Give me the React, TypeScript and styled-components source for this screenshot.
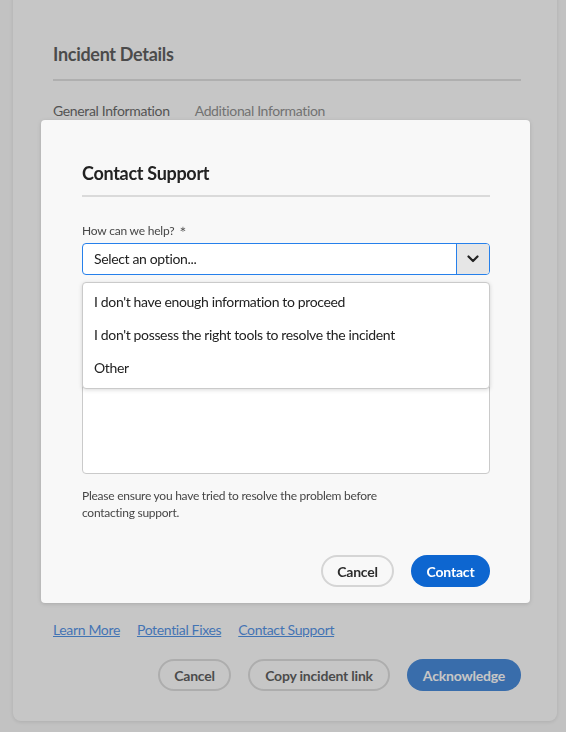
import React from "react";
import styled, { createGlobalStyle } from "styled-components";

const GlobalStyle = createGlobalStyle`
  html, body { margin: 0; padding: 0; }
  body {
    background: #f9f9f9;
    font-family: Lato, "Noto Sans", sans-serif;
    color: #222;
    width: 566px;
    height: 732px;
    overflow: hidden;
  }
  * { box-sizing: border-box; }
`;

const Page = styled.div`
  position: relative;
  width: 566px;
  height: 732px;
  padding: 0 9px 0 13px;
`;

const Card = styled.section`
  margin-top: -10px;
  height: 731px;
  background: #fff;
  border-radius: 8px;
  box-shadow: 0 1px 4px rgba(0, 0, 0, 0.15);
  padding: 51px 36px 0 40px;
  display: flex;
  flex-direction: column;
`;

const CardTitle = styled.h2`
  margin: 0;
  font-size: 18px;
  line-height: 26px;
  font-weight: 700;
  letter-spacing: -0.3px;
  color: #2c2c2c;
`;

const Divider = styled.hr<{ $color: string; $top?: number }>`
  margin: ${(p) => p.$top ?? 0}px 0 0;
  border: none;
  height: 2px;
  background: ${(p) => p.$color};
`;

const Tabs = styled.nav`
  display: flex;
  gap: 25px;
  margin-top: 20px;
`;

const Tab = styled.span<{ $active?: boolean }>`
  font-size: 14px;
  line-height: 20px;
  letter-spacing: -0.35px;
  color: ${(p) => (p.$active ? "#383838" : "#6e6e6e")};
`;

const TabPanel = styled.div`
  flex: 1;
`;

const Links = styled.div`
  display: flex;
  gap: 17px;
  margin-bottom: 19px;
`;

const Link = styled.a`
  font-size: 14px;
  line-height: 20px;
  letter-spacing: -0.35px;
  color: #1a72e0;
  text-decoration: underline;
  cursor: pointer;
`;

const ButtonRow = styled.div<{ $gap: number }>`
  display: flex;
  justify-content: flex-end;
  gap: ${(p) => p.$gap}px;
`;

const Button = styled.button<{ $primary?: boolean; $w: number }>`
  width: ${(p) => p.$w}px;
  height: 32px;
  border-radius: 16px;
  font-family: inherit;
  font-size: 14px;
  font-weight: 700;
  letter-spacing: -0.2px;
  padding: 0;
  cursor: pointer;
  border: 2px solid ${(p) => (p.$primary ? "transparent" : "#d5d5d5")};
  background: ${(p) => (p.$primary ? "#0d66d0" : "transparent")};
  color: ${(p) => (p.$primary ? "#fff" : "#2c2c2c")};
`;

const CardFooter = styled.div`
  height: 30px;
`;

const Underlay = styled.div`
  position: fixed;
  inset: 0;
  background: rgba(120, 120, 120, 0.42);
`;

const Dialog = styled.div`
  position: fixed;
  left: 41px;
  top: 120px;
  width: 489px;
  height: 483px;
  background: #f8f8f8;
  border-radius: 4px;
  box-shadow: 0 1px 4px rgba(0, 0, 0, 0.15);
  padding: 40px 40px 16px 41px;
  display: flex;
  flex-direction: column;
`;

const DialogTitle = styled.h1`
  margin: 0 0 9px;
  font-size: 18px;
  line-height: 26px;
  font-weight: 700;
  letter-spacing: -0.3px;
  color: #222;
`;

const Field = styled.div<{ $top: number }>`
  position: relative;
  display: flex;
  flex-direction: column;
  gap: 4px;
  margin-top: ${(p) => p.$top}px;
`;

const Label = styled.label`
  font-size: 12px;
  line-height: 16px;
  letter-spacing: -0.2px;
  color: #464646;
`;

const Picker = styled.div`
  height: 32px;
  display: flex;
  border: 1px solid #2680eb;
  border-radius: 4px;
  background: #fff;
  overflow: hidden;
`;

const PickerValue = styled.span`
  flex: 1;
  padding-left: 11px;
  font-size: 14px;
  line-height: 30px;
  letter-spacing: -0.35px;
  color: #222;
`;

const PickerButton = styled.span`
  width: 33px;
  border-left: 1px solid #2680eb;
  background: #e6e6e6;
  display: flex;
  align-items: center;
  justify-content: center;
`;

const Popover = styled.ul`
  position: absolute;
  top: calc(100% + 7px);
  left: 0;
  right: 0;
  margin: 0;
  padding: 2px 0 4px;
  list-style: none;
  background: #fff;
  border: 1px solid #cacaca;
  border-radius: 4px;
  box-shadow: 0 1px 4px rgba(0, 0, 0, 0.15);
  z-index: 2;
`;

const Option = styled.li`
  height: 33px;
  padding-left: 11px;
  font-size: 14px;
  line-height: 33px;
  letter-spacing: -0.35px;
  color: #222;
`;

const TextArea = styled.div`
  height: 163px;
  border: 1px solid #cacaca;
  border-radius: 4px;
  background: #fff;
`;

const Help = styled.p`
  margin: 13px 0 0;
  width: 310px;
  font-size: 12px;
  line-height: 17px;
  letter-spacing: -0.25px;
  color: #464646;
`;

const DialogButtons = styled(ButtonRow)`
  margin-top: auto;
`;

const Chevron = () => (
  <svg width="12" height="8" viewBox="0 0 12 8" aria-hidden>
    <path d="M1.5 1.5 L6 6 L10.5 1.5" fill="none" stroke="#222" strokeWidth="2.2" strokeLinecap="round" strokeLinejoin="round" />
  </svg>
);

export default function App() {
  return (
    <>
      <GlobalStyle />
      <Page>
        <Card>
          <CardTitle>Incident Details</CardTitle>
          <Divider $color="#d8d8d8" $top={12} />
          <Tabs>
            <Tab $active>General Information</Tab>
            <Tab>Additional Information</Tab>
          </Tabs>
          <TabPanel />
          <Links>
            <Link>Learn More</Link>
            <Link>Potential Fixes</Link>
            <Link>Contact Support</Link>
          </Links>
          <ButtonRow $gap={17}>
            <Button $w={73}>Cancel</Button>
            <Button $w={142}>Copy incident link</Button>
            <Button $primary $w={114}>Acknowledge</Button>
          </ButtonRow>
          <CardFooter />
        </Card>
        <Underlay />
        <Dialog>
          <DialogTitle>Contact Support</DialogTitle>
          <Divider $color="#dadada" />
          <Field $top={26}>
            <Label>How can we help? ＊</Label>
            <Picker>
              <PickerValue>Select an option...</PickerValue>
              <PickerButton>
                <Chevron />
              </PickerButton>
            </Picker>
            <Popover>
              <Option>I don't have enough information to proceed</Option>
              <Option>I don't possess the right tools to resolve the incident</Option>
              <Option>Other</Option>
            </Popover>
          </Field>
          <Field $top={36}>
            <TextArea />
          </Field>
          <Help>Please ensure you have tried to resolve the problem before contacting support.</Help>
          <DialogButtons $gap={17}>
            <Button $w={73}>Cancel</Button>
            <Button $primary $w={79}>Contact</Button>
          </DialogButtons>
        </Dialog>
      </Page>
    </>
  );
}
